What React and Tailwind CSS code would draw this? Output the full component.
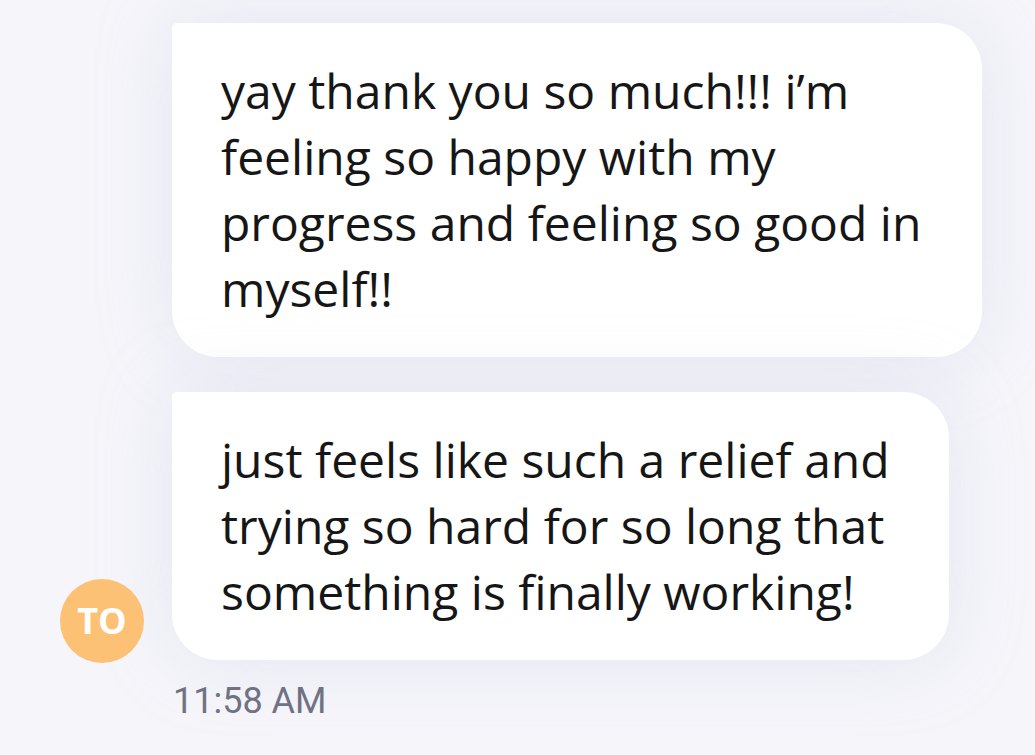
const messages = [
  ['yay thank you so much!!! i’m', 'feeling so happy with my', 'progress and feeling so good in', 'myself!!'],
  ['just feels like such a relief and', 'trying so hard for so long that', 'something is finally working!'],
];

const widths = ['w-[810px]', 'w-[777px]'];

const Bubble = ({ lines, width }) => (
  <div
    className={`${width} bg-white rounded-[46px] rounded-tl-[5px] pl-[49px] pr-[20px] py-[35px] shadow-[0_0_70px_rgba(200,202,230,0.35)]`}
  >
    {lines.map((line) => (
      <p key={line} className="text-[48px] leading-[66px] text-[#161616] whitespace-nowrap">
        {line}
      </p>
    ))}
  </div>
);

export default function App() {
  return (
    <div
      className="w-[1035px] h-[755px] overflow-hidden bg-[#f5f5fa] pl-[60px] pt-[23px]"
      style={{ fontFamily: '"Open Sans", sans-serif' }}
    >
      <div className="flex items-end gap-[28px]">
        {/* Avatar */}
        <div className="w-[84px] h-[84px] shrink-0 rounded-full bg-[#fcc175] flex items-center justify-center translate-y-[3px]">
          <span className="text-white text-[36px] leading-none font-bold">TO</span>
        </div>

        {/* Messages */}
        <div className="flex flex-col gap-[35px]">
          {messages.map((lines, i) => (
            <Bubble key={i} lines={lines} width={widths[i]} />
          ))}
        </div>
      </div>

      {/* Timestamp */}
      <p
        className="mt-[20px] pl-[113px] text-[36px] leading-[42px] text-[#6f7282]"
        style={{ fontFamily: 'Roboto, sans-serif' }}
      >
        11:58 AM
      </p>
    </div>
  );
}
